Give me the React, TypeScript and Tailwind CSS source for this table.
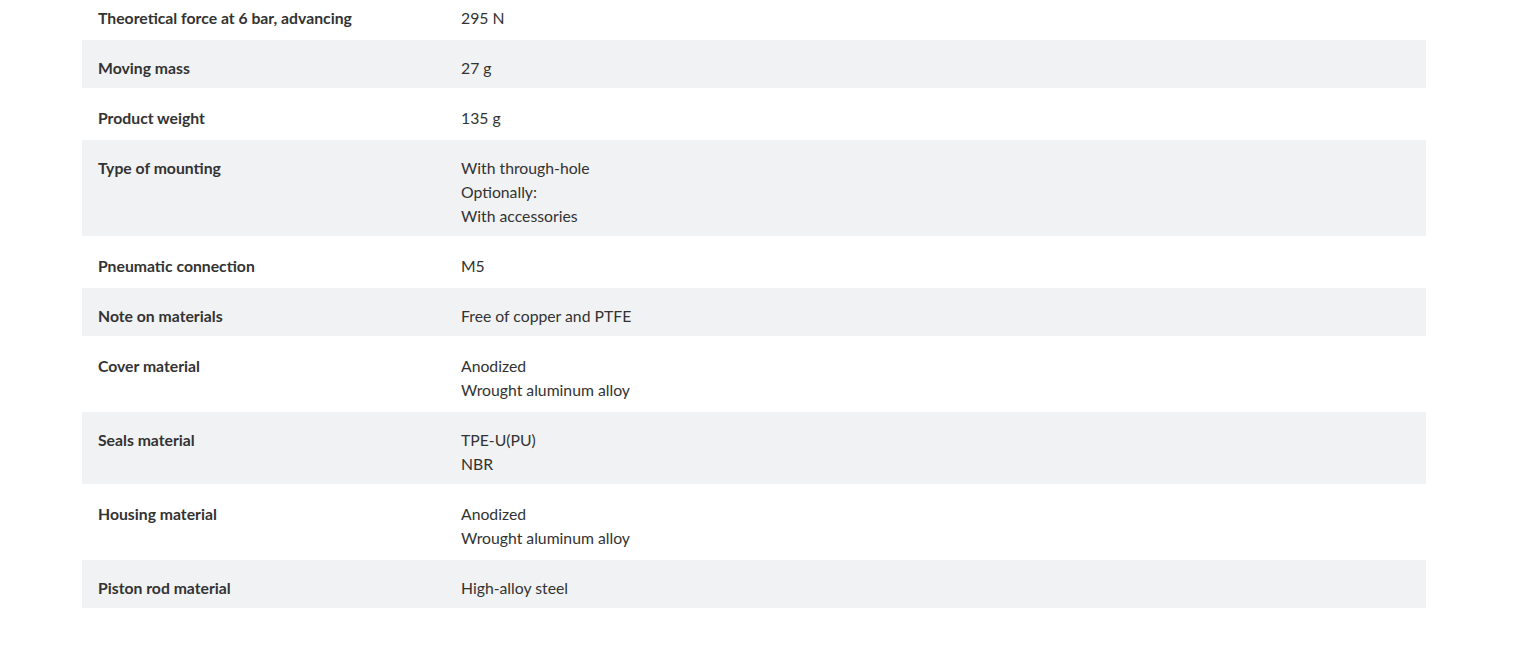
const specs = [
  { label: 'Theoretical force at 6 bar, advancing', value: ['295 N'] },
  { label: 'Moving mass', value: ['27 g'] },
  { label: 'Product weight', value: ['135 g'] },
  { label: 'Type of mounting', value: ['With through-hole', 'Optionally:', 'With accessories'] },
  { label: 'Pneumatic connection', value: ['M5'] },
  { label: 'Note on materials', value: ['Free of copper and PTFE'] },
  { label: 'Cover material', value: ['Anodized', 'Wrought aluminum alloy'] },
  { label: 'Seals material', value: ['TPE-U(PU)', 'NBR'] },
  { label: 'Housing material', value: ['Anodized', 'Wrought aluminum alloy'] },
  { label: 'Piston rod material', value: ['High-alloy steel'] },
]

export default function App() {
  return (
    <div
      className="min-h-[647px] bg-white text-[15.75px] leading-6 text-[#333333] overflow-hidden"
      style={{ fontFamily: 'Lato, "Liberation Sans", sans-serif' }}
    >
      <div className="ml-[82px] w-[1344px] mt-[-12px]">
        {specs.map((s, i) => (
          <div
            key={s.label}
            className={
              i % 2 === 1
                ? 'grid grid-cols-[379px_1fr] bg-[#f1f2f4] pt-4 pb-2'
                : 'grid grid-cols-[379px_1fr] bg-white pt-[18px] pb-[10px]'
            }
          >
            <div className="pl-4 font-bold">{s.label}</div>
            <div>
              {s.value.map((v) => (
                <div key={v}>{v}</div>
              ))}
            </div>
          </div>
        ))}
      </div>
    </div>
  )
}
